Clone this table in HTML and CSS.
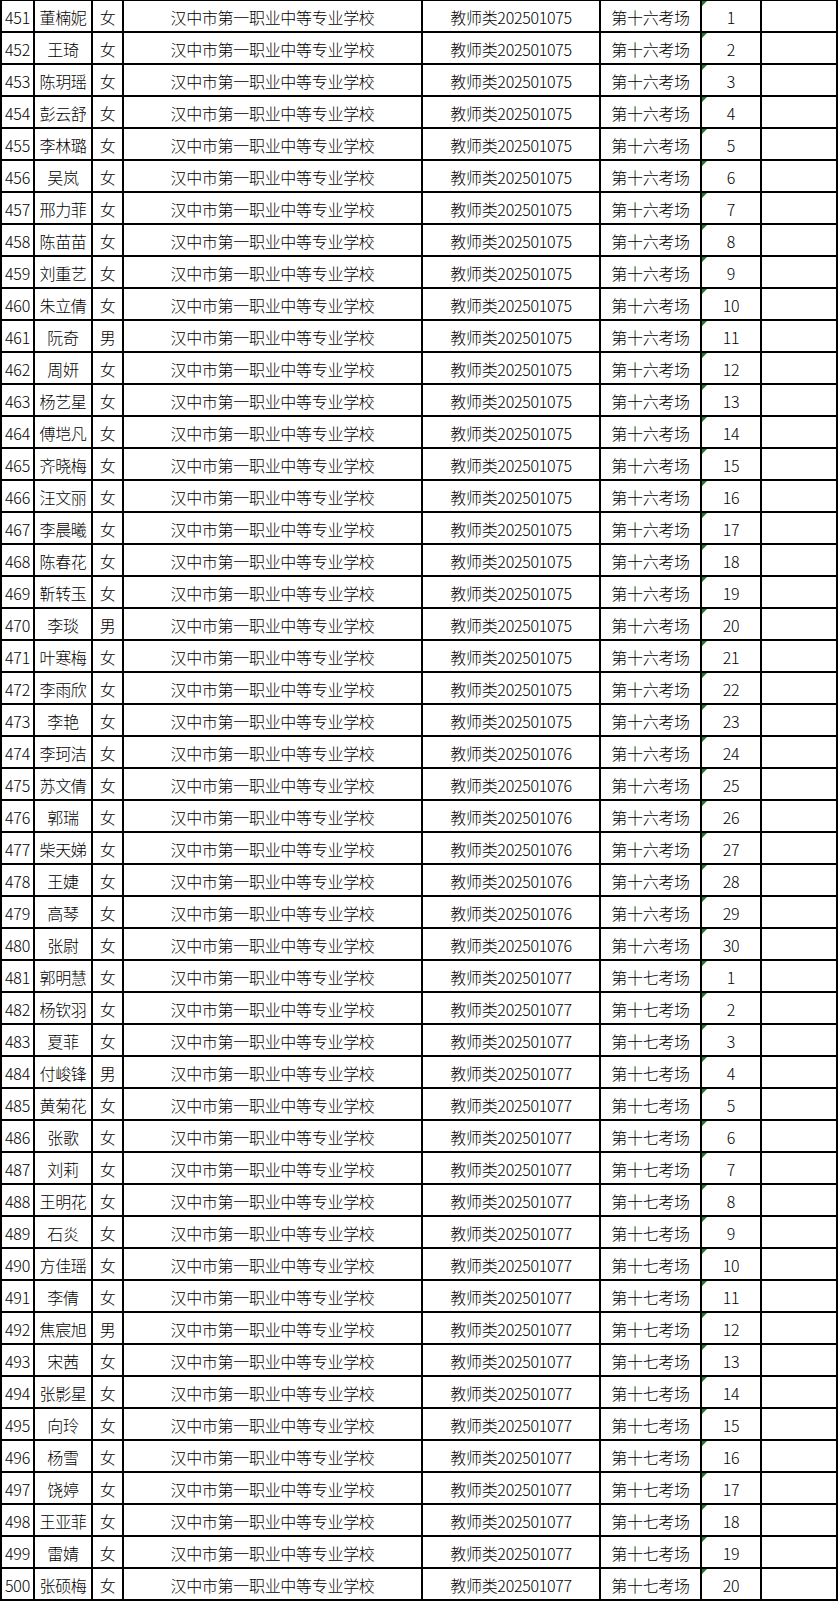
FILE: index.html
```html
<!DOCTYPE html>
<html lang="zh-CN">
<head>
<meta charset="utf-8">
<title>考场名单</title>
<link rel="stylesheet" href="styles.css">
</head>
<body>
<div class="sheet">
<div class="c">451</div><div class="c">董楠妮</div><div class="c">女</div><div class="c">汉中市第一职业中等专业学校</div><div class="c">教师类202501075</div><div class="c">第十六考场</div><div class="c n">1</div><div class="c"></div>
<div class="c">452</div><div class="c">王琦</div><div class="c">女</div><div class="c">汉中市第一职业中等专业学校</div><div class="c">教师类202501075</div><div class="c">第十六考场</div><div class="c n">2</div><div class="c"></div>
<div class="c">453</div><div class="c">陈玥瑶</div><div class="c">女</div><div class="c">汉中市第一职业中等专业学校</div><div class="c">教师类202501075</div><div class="c">第十六考场</div><div class="c n">3</div><div class="c"></div>
<div class="c">454</div><div class="c">彭云舒</div><div class="c">女</div><div class="c">汉中市第一职业中等专业学校</div><div class="c">教师类202501075</div><div class="c">第十六考场</div><div class="c n">4</div><div class="c"></div>
<div class="c">455</div><div class="c">李林璐</div><div class="c">女</div><div class="c">汉中市第一职业中等专业学校</div><div class="c">教师类202501075</div><div class="c">第十六考场</div><div class="c n">5</div><div class="c"></div>
<div class="c">456</div><div class="c">吴岚</div><div class="c">女</div><div class="c">汉中市第一职业中等专业学校</div><div class="c">教师类202501075</div><div class="c">第十六考场</div><div class="c n">6</div><div class="c"></div>
<div class="c">457</div><div class="c">邢力菲</div><div class="c">女</div><div class="c">汉中市第一职业中等专业学校</div><div class="c">教师类202501075</div><div class="c">第十六考场</div><div class="c n">7</div><div class="c"></div>
<div class="c">458</div><div class="c">陈苗苗</div><div class="c">女</div><div class="c">汉中市第一职业中等专业学校</div><div class="c">教师类202501075</div><div class="c">第十六考场</div><div class="c n">8</div><div class="c"></div>
<div class="c">459</div><div class="c">刘重艺</div><div class="c">女</div><div class="c">汉中市第一职业中等专业学校</div><div class="c">教师类202501075</div><div class="c">第十六考场</div><div class="c n">9</div><div class="c"></div>
<div class="c">460</div><div class="c">朱立倩</div><div class="c">女</div><div class="c">汉中市第一职业中等专业学校</div><div class="c">教师类202501075</div><div class="c">第十六考场</div><div class="c n">10</div><div class="c"></div>
<div class="c">461</div><div class="c">阮奇</div><div class="c">男</div><div class="c">汉中市第一职业中等专业学校</div><div class="c">教师类202501075</div><div class="c">第十六考场</div><div class="c n">11</div><div class="c"></div>
<div class="c">462</div><div class="c">周妍</div><div class="c">女</div><div class="c">汉中市第一职业中等专业学校</div><div class="c">教师类202501075</div><div class="c">第十六考场</div><div class="c n">12</div><div class="c"></div>
<div class="c">463</div><div class="c">杨艺星</div><div class="c">女</div><div class="c">汉中市第一职业中等专业学校</div><div class="c">教师类202501075</div><div class="c">第十六考场</div><div class="c n">13</div><div class="c"></div>
<div class="c">464</div><div class="c">傅垲凡</div><div class="c">女</div><div class="c">汉中市第一职业中等专业学校</div><div class="c">教师类202501075</div><div class="c">第十六考场</div><div class="c n">14</div><div class="c"></div>
<div class="c">465</div><div class="c">齐晓梅</div><div class="c">女</div><div class="c">汉中市第一职业中等专业学校</div><div class="c">教师类202501075</div><div class="c">第十六考场</div><div class="c n">15</div><div class="c"></div>
<div class="c">466</div><div class="c">汪文丽</div><div class="c">女</div><div class="c">汉中市第一职业中等专业学校</div><div class="c">教师类202501075</div><div class="c">第十六考场</div><div class="c n">16</div><div class="c"></div>
<div class="c">467</div><div class="c">李晨曦</div><div class="c">女</div><div class="c">汉中市第一职业中等专业学校</div><div class="c">教师类202501075</div><div class="c">第十六考场</div><div class="c n">17</div><div class="c"></div>
<div class="c">468</div><div class="c">陈春花</div><div class="c">女</div><div class="c">汉中市第一职业中等专业学校</div><div class="c">教师类202501075</div><div class="c">第十六考场</div><div class="c n">18</div><div class="c"></div>
<div class="c">469</div><div class="c">靳转玉</div><div class="c">女</div><div class="c">汉中市第一职业中等专业学校</div><div class="c">教师类202501075</div><div class="c">第十六考场</div><div class="c n">19</div><div class="c"></div>
<div class="c">470</div><div class="c">李琰</div><div class="c">男</div><div class="c">汉中市第一职业中等专业学校</div><div class="c">教师类202501075</div><div class="c">第十六考场</div><div class="c n">20</div><div class="c"></div>
<div class="c">471</div><div class="c">叶寒梅</div><div class="c">女</div><div class="c">汉中市第一职业中等专业学校</div><div class="c">教师类202501075</div><div class="c">第十六考场</div><div class="c n">21</div><div class="c"></div>
<div class="c">472</div><div class="c">李雨欣</div><div class="c">女</div><div class="c">汉中市第一职业中等专业学校</div><div class="c">教师类202501075</div><div class="c">第十六考场</div><div class="c n">22</div><div class="c"></div>
<div class="c">473</div><div class="c">李艳</div><div class="c">女</div><div class="c">汉中市第一职业中等专业学校</div><div class="c">教师类202501075</div><div class="c">第十六考场</div><div class="c n">23</div><div class="c"></div>
<div class="c">474</div><div class="c">李珂洁</div><div class="c">女</div><div class="c">汉中市第一职业中等专业学校</div><div class="c">教师类202501076</div><div class="c">第十六考场</div><div class="c n">24</div><div class="c"></div>
<div class="c">475</div><div class="c">苏文倩</div><div class="c">女</div><div class="c">汉中市第一职业中等专业学校</div><div class="c">教师类202501076</div><div class="c">第十六考场</div><div class="c n">25</div><div class="c"></div>
<div class="c">476</div><div class="c">郭瑞</div><div class="c">女</div><div class="c">汉中市第一职业中等专业学校</div><div class="c">教师类202501076</div><div class="c">第十六考场</div><div class="c n">26</div><div class="c"></div>
<div class="c">477</div><div class="c">柴天娣</div><div class="c">女</div><div class="c">汉中市第一职业中等专业学校</div><div class="c">教师类202501076</div><div class="c">第十六考场</div><div class="c n">27</div><div class="c"></div>
<div class="c">478</div><div class="c">王婕</div><div class="c">女</div><div class="c">汉中市第一职业中等专业学校</div><div class="c">教师类202501076</div><div class="c">第十六考场</div><div class="c n">28</div><div class="c"></div>
<div class="c">479</div><div class="c">高琴</div><div class="c">女</div><div class="c">汉中市第一职业中等专业学校</div><div class="c">教师类202501076</div><div class="c">第十六考场</div><div class="c n">29</div><div class="c"></div>
<div class="c">480</div><div class="c">张尉</div><div class="c">女</div><div class="c">汉中市第一职业中等专业学校</div><div class="c">教师类202501076</div><div class="c">第十六考场</div><div class="c n">30</div><div class="c"></div>
<div class="c">481</div><div class="c">郭明慧</div><div class="c">女</div><div class="c">汉中市第一职业中等专业学校</div><div class="c">教师类202501077</div><div class="c">第十七考场</div><div class="c n">1</div><div class="c"></div>
<div class="c">482</div><div class="c">杨钦羽</div><div class="c">女</div><div class="c">汉中市第一职业中等专业学校</div><div class="c">教师类202501077</div><div class="c">第十七考场</div><div class="c n">2</div><div class="c"></div>
<div class="c">483</div><div class="c">夏菲</div><div class="c">女</div><div class="c">汉中市第一职业中等专业学校</div><div class="c">教师类202501077</div><div class="c">第十七考场</div><div class="c n">3</div><div class="c"></div>
<div class="c">484</div><div class="c">付峻锋</div><div class="c">男</div><div class="c">汉中市第一职业中等专业学校</div><div class="c">教师类202501077</div><div class="c">第十七考场</div><div class="c n">4</div><div class="c"></div>
<div class="c">485</div><div class="c">黄菊花</div><div class="c">女</div><div class="c">汉中市第一职业中等专业学校</div><div class="c">教师类202501077</div><div class="c">第十七考场</div><div class="c n">5</div><div class="c"></div>
<div class="c">486</div><div class="c">张歌</div><div class="c">女</div><div class="c">汉中市第一职业中等专业学校</div><div class="c">教师类202501077</div><div class="c">第十七考场</div><div class="c n">6</div><div class="c"></div>
<div class="c">487</div><div class="c">刘莉</div><div class="c">女</div><div class="c">汉中市第一职业中等专业学校</div><div class="c">教师类202501077</div><div class="c">第十七考场</div><div class="c n">7</div><div class="c"></div>
<div class="c">488</div><div class="c">王明花</div><div class="c">女</div><div class="c">汉中市第一职业中等专业学校</div><div class="c">教师类202501077</div><div class="c">第十七考场</div><div class="c n">8</div><div class="c"></div>
<div class="c">489</div><div class="c">石炎</div><div class="c">女</div><div class="c">汉中市第一职业中等专业学校</div><div class="c">教师类202501077</div><div class="c">第十七考场</div><div class="c n">9</div><div class="c"></div>
<div class="c">490</div><div class="c">方佳瑶</div><div class="c">女</div><div class="c">汉中市第一职业中等专业学校</div><div class="c">教师类202501077</div><div class="c">第十七考场</div><div class="c n">10</div><div class="c"></div>
<div class="c">491</div><div class="c">李倩</div><div class="c">女</div><div class="c">汉中市第一职业中等专业学校</div><div class="c">教师类202501077</div><div class="c">第十七考场</div><div class="c n">11</div><div class="c"></div>
<div class="c">492</div><div class="c">焦宸旭</div><div class="c">男</div><div class="c">汉中市第一职业中等专业学校</div><div class="c">教师类202501077</div><div class="c">第十七考场</div><div class="c n">12</div><div class="c"></div>
<div class="c">493</div><div class="c">宋茜</div><div class="c">女</div><div class="c">汉中市第一职业中等专业学校</div><div class="c">教师类202501077</div><div class="c">第十七考场</div><div class="c n">13</div><div class="c"></div>
<div class="c">494</div><div class="c">张影星</div><div class="c">女</div><div class="c">汉中市第一职业中等专业学校</div><div class="c">教师类202501077</div><div class="c">第十七考场</div><div class="c n">14</div><div class="c"></div>
<div class="c">495</div><div class="c">向玲</div><div class="c">女</div><div class="c">汉中市第一职业中等专业学校</div><div class="c">教师类202501077</div><div class="c">第十七考场</div><div class="c n">15</div><div class="c"></div>
<div class="c">496</div><div class="c">杨雪</div><div class="c">女</div><div class="c">汉中市第一职业中等专业学校</div><div class="c">教师类202501077</div><div class="c">第十七考场</div><div class="c n">16</div><div class="c"></div>
<div class="c">497</div><div class="c">饶婷</div><div class="c">女</div><div class="c">汉中市第一职业中等专业学校</div><div class="c">教师类202501077</div><div class="c">第十七考场</div><div class="c n">17</div><div class="c"></div>
<div class="c">498</div><div class="c">王亚菲</div><div class="c">女</div><div class="c">汉中市第一职业中等专业学校</div><div class="c">教师类202501077</div><div class="c">第十七考场</div><div class="c n">18</div><div class="c"></div>
<div class="c">499</div><div class="c">雷婧</div><div class="c">女</div><div class="c">汉中市第一职业中等专业学校</div><div class="c">教师类202501077</div><div class="c">第十七考场</div><div class="c n">19</div><div class="c"></div>
<div class="c">500</div><div class="c">张硕梅</div><div class="c">女</div><div class="c">汉中市第一职业中等专业学校</div><div class="c">教师类202501077</div><div class="c">第十七考场</div><div class="c n">20</div><div class="c"></div>
</div>
</body>
</html>
```
FILE: styles.css
```css
html, body {
  margin: 0;
  padding: 0;
  background: #fff;
  overflow: hidden;
}
.sheet {
  display: grid;
  grid-template-columns: 31px 56px 29px 297px 176px 99px 58px 74px;
  grid-auto-rows: 30px;
  gap: 2px;
  padding: 2px;
  width: 838px;
  box-sizing: border-box;
  margin-top: -1px;
  background: #000;
  font-family: "Noto Sans CJK SC", "Noto Sans", sans-serif;
  font-size: 16px;
  font-weight: 300;
  color: #000;
}
.c {
  background: #fff;
  display: flex;
  align-items: center;
  justify-content: center;
  white-space: nowrap;
  line-height: 1;
  padding-top: 2px;
  box-sizing: border-box;
  letter-spacing: -0.3px;
}
.n {
  position: relative;
}
.n::before {
  content: "";
  position: absolute;
  left: 0;
  top: 0;
  width: 0;
  height: 0;
  border-top: 5px solid #1e7b30;
  border-right: 5px solid transparent;
}
```
